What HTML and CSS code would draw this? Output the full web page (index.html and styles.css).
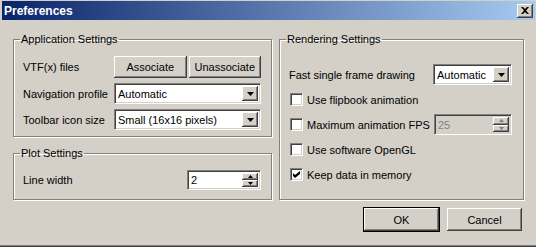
FILE: index.html
```html
<!DOCTYPE html>
<html lang="en">
<head>
  <meta charset="UTF-8">
  <title>Preferences</title>
  <link rel="stylesheet" href="styles.css">
</head>
<body>
  <div class="window">
    <div class="titlebar">
      <span class="title">Preferences</span>
      <button class="close"><svg width="8" height="7" viewBox="0 0 8 7"><path d="M0 0h2l2 2 2-2h2L5 3.5 8 7H6L4 5 2 7H0l3-3.5z"/></svg></button>
    </div>
    <div class="content">
      <div class="columns">
        <div class="column left">
          <fieldset class="group">
            <legend>Application Settings</legend>
            <div class="group-body app-grid">
              <label>VTF(x) files</label>
              <div class="button-pair">
                <button class="btn">Associate</button>
                <button class="btn">Unassociate</button>
              </div>
              <label>Navigation profile</label>
              <div class="combo">
                <span class="combo-text">Automatic</span>
                <span class="drop"><svg width="7" height="4" viewBox="0 0 7 4"><path d="M0 0h7L3.5 4z"/></svg></span>
              </div>
              <label>Toolbar icon size</label>
              <div class="combo">
                <span class="combo-text">Small (16x16 pixels)</span>
                <span class="drop"><svg width="7" height="4" viewBox="0 0 7 4"><path d="M0 0h7L3.5 4z"/></svg></span>
              </div>
            </div>
          </fieldset>
          <fieldset class="group">
            <legend>Plot Settings</legend>
            <div class="group-body plot-row">
              <label>Line width</label>
              <div class="spin">
                <span class="spin-text">2</span>
                <span class="spin-buttons">
                  <span class="spin-btn"><svg width="5" height="3" viewBox="0 0 5 3"><path d="M2.5 0L5 3H0z"/></svg></span>
                  <span class="spin-btn"><svg width="5" height="3" viewBox="0 0 5 3"><path d="M0 0h5L2.5 3z"/></svg></span>
                </span>
              </div>
            </div>
          </fieldset>
        </div>
        <div class="column right">
          <fieldset class="group">
            <legend>Rendering Settings</legend>
            <div class="group-body render-list">
              <div class="render-row">
                <label>Fast single frame drawing</label>
                <div class="combo small">
                  <span class="combo-text">Automatic</span>
                  <span class="drop"><svg width="7" height="4" viewBox="0 0 7 4"><path d="M0 0h7L3.5 4z"/></svg></span>
                </div>
              </div>
              <div class="render-row">
                <span class="check-label"><span class="check"></span>Use flipbook animation</span>
              </div>
              <div class="render-row">
                <span class="check-label"><span class="check"></span>Maximum animation FPS</span>
                <div class="spin small disabled">
                  <span class="spin-text">25</span>
                  <span class="spin-buttons">
                    <span class="spin-btn"><svg width="5" height="3" viewBox="0 0 5 3"><path d="M2.5 0L5 3H0z"/></svg></span>
                    <span class="spin-btn"><svg width="5" height="3" viewBox="0 0 5 3"><path d="M0 0h5L2.5 3z"/></svg></span>
                  </span>
                </div>
              </div>
              <div class="render-row">
                <span class="check-label"><span class="check"></span>Use software OpenGL</span>
              </div>
              <div class="render-row">
                <span class="check-label"><span class="check"><svg width="7" height="7" viewBox="0 0 7 7"><path d="M0 2l2 2 5-4v3L2 7 0 5z"/></svg></span>Keep data in memory</span>
              </div>
            </div>
          </fieldset>
        </div>
      </div>
      <div class="actions">
        <button class="btn dialog-btn default">OK</button>
        <button class="btn dialog-btn">Cancel</button>
      </div>
    </div>
  </div>
</body>
</html>
```

FILE: styles.css
```css
body {
  margin: 0;
  background: #d4d0c8;
  font: 11px "Liberation Sans", Arial, sans-serif;
  color: #000;
}
.window {
  width: 536px;
  height: 247px;
  box-sizing: border-box;
  padding: 1px 1px 0 2px;
  display: flex;
  flex-direction: column;
  background: #d4d0c8;
  box-shadow: inset 0 -1px #404040, inset 0 -2px #808080;
}
.titlebar {
  height: 19px;
  display: flex;
  align-items: center;
  justify-content: space-between;
  padding: 0 2px;
  background: linear-gradient(to right, #0a246a, #a6caf0);
}
.title {
  color: #fff;
  font-weight: bold;
  font-size: 12px;
}
.close {
  width: 16px;
  height: 14px;
  padding: 0;
  border: 0;
  display: flex;
  align-items: center;
  justify-content: center;
  background: #d4d0c8;
  box-shadow: inset -1px -1px #404040, inset 1px 1px #fff, inset -2px -2px #808080;
}
.content {
  flex: 1;
  display: flex;
  flex-direction: column;
  padding: 13px 11px 0 11px;
}
.columns {
  display: flex;
  gap: 7px;
}
.left {
  width: 259px;
  display: flex;
  flex-direction: column;
  gap: 10px;
}
.right {
  flex: 1;
  display: flex;
}
.right .group {
  flex: 1;
}
.group {
  margin: 0;
  padding: 0;
  min-width: 0;
  border: 1px solid #808080;
  box-shadow: inset 1px 1px #fff, 1px 1px #fff;
}
.group legend {
  margin-left: 6px;
  padding: 0 1px;
  line-height: 13px;
}

/* application settings */
.app-grid {
  display: grid;
  grid-template-columns: 91px 147px;
  grid-template-rows: 22px 21px 21px;
  row-gap: 5px;
  align-items: center;
  padding: 10px 10px 6px 9px;
}
.button-pair {
  display: flex;
  gap: 2px;
  height: 22px;
}
.button-pair .btn {
  flex: 1;
}

/* plot settings */
.plot-row {
  display: flex;
  justify-content: space-between;
  align-items: center;
  padding: 10px 10px 9px 9px;
}

/* rendering settings */
.render-list {
  display: flex;
  flex-direction: column;
  gap: 4px;
  padding: 18px 11px 0 9px;
}
.render-row {
  height: 21px;
  display: flex;
  align-items: center;
  justify-content: space-between;
}
.check-label {
  display: flex;
  align-items: center;
  gap: 4px;
  margin-left: 1px;
}
.check {
  width: 13px;
  height: 13px;
  box-sizing: border-box;
  display: flex;
  align-items: center;
  justify-content: center;
  background: #fff;
  border: 1px solid;
  border-color: #808080 #fff #fff #808080;
  box-shadow: inset 1px 1px #404040, inset -1px -1px #d4d0c8;
}

/* controls */
.btn {
  font: inherit;
  color: #000;
  padding: 0;
  border: 0;
  background: #d4d0c8;
  box-shadow: inset -1px -1px #404040, inset 1px 1px #fff, inset -2px -2px #808080;
}
.combo, .spin {
  height: 21px;
  box-sizing: border-box;
  display: flex;
  align-items: stretch;
  background: #fff;
  padding: 2px;
  border: 1px solid;
  border-color: #808080 #fff #fff #808080;
  box-shadow: inset 1px 1px #404040, inset -1px -1px #d4d0c8;
}
.combo.small {
  width: 79px;
}
.combo-text, .spin-text {
  flex: 1;
  display: flex;
  align-items: center;
  padding-left: 1px;
}
.drop {
  width: 16px;
  display: flex;
  align-items: center;
  justify-content: center;
  background: #d4d0c8;
  box-shadow: inset -1px -1px #404040, inset 1px 1px #fff, inset -2px -2px #808080;
}
.spin {
  width: 74px;
  height: 20px;
}
.spin.small {
  width: 78px;
  height: 21px;
}
.spin.disabled {
  background: #d4d0c8;
  color: #808080;
}
.spin.disabled svg {
  fill: #808080;
}
.spin-buttons {
  width: 16px;
  display: flex;
  flex-direction: column;
}
.spin-btn {
  flex: 1;
  display: flex;
  align-items: center;
  justify-content: center;
  background: #d4d0c8;
  box-shadow: inset -1px -1px #404040, inset 1px 1px #fff, inset -2px -2px #808080;
}

/* dialog buttons */
.actions {
  display: flex;
  justify-content: flex-end;
  align-items: center;
  gap: 7px;
  margin-top: 7px;
  padding-right: 2px;
}
.dialog-btn {
  width: 75px;
  height: 23px;
}
.dialog-btn.default {
  width: 77px;
  height: 25px;
  border: 1px solid #000;
}
```
